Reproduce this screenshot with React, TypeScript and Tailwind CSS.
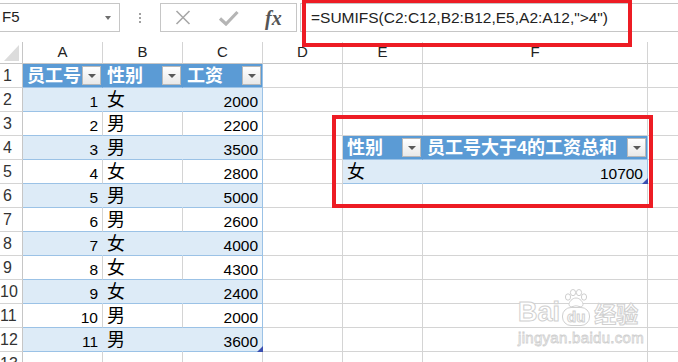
import React from 'react';

const data: [number, string, number][] = [
  [1, '女', 2000],
  [2, '男', 2200],
  [3, '男', 3500],
  [4, '女', 2800],
  [5, '男', 5000],
  [6, '男', 2600],
  [7, '女', 4000],
  [8, '女', 4300],
  [9, '女', 2400],
  [10, '男', 2000],
  [11, '男', 3600],
];

type Kind = 'plain' | 'head' | 'band' | 'row';

const kindClass = (kind: Kind, last: boolean) => {
  if (kind === 'head')
    return 'bg-[#5b9bd5] border-b border-b-[#9bc2e6] border-r ' + (last ? 'border-r-[#9bc2e6]' : 'border-r-[#5b9bd5]');
  if (kind === 'band')
    return 'bg-[#ddebf7] border-b border-b-[#9bc2e6] border-r ' + (last ? 'border-r-[#9bc2e6]' : 'border-r-[#ddebf7]');
  if (kind === 'row')
    return 'bg-white border-b border-b-[#9bc2e6] border-r ' + (last ? 'border-r-[#9bc2e6]' : 'border-r-[#d4d4d4]');
  return 'bg-white border-b border-r border-[#d4d4d4]';
};

const FilterBtn = () => (
  <div className="ml-auto mr-[1px] flex h-[19px] w-[19px] shrink-0 items-center justify-center border border-[#b9b9b9] bg-gradient-to-b from-white to-[#e9e9e9]">
    <div className="h-0 w-0 border-x-[4px] border-t-[4px] border-x-transparent border-t-[#595959]" />
  </div>
);

const Handle = () => (
  <div className="absolute bottom-[-1px] right-[-1px] h-[6px] w-[6px] bg-[#3a4fb0] [clip-path:polygon(100%_0,100%_100%,0_100%)]" />
);

function Cell({
  kind = 'plain',
  last = false,
  children,
  className = '',
}: {
  kind?: Kind;
  last?: boolean;
  children?: React.ReactNode;
  className?: string;
}) {
  return <div className={'relative flex min-w-0 items-center overflow-visible ' + kindClass(kind, last) + ' ' + className}>{children}</div>;
}

const HeadCell = ({ label, last = false }: { label: string; last?: boolean }) => (
  <Cell kind="head" last={last} className="pl-[4px]">
    <span className="whitespace-nowrap text-[18px] font-bold leading-none text-white">{label}</span>
    <FilterBtn />
  </Cell>
);

const Num = ({ v }: { v: number }) => (
  <span className="ml-auto pr-[4px] pt-[4px] text-[15.5px] leading-none text-black">{v}</span>
);

const Cjk = ({ v }: { v: string }) => (
  <span className="pl-[4px] text-[18px] leading-none text-black">{v}</span>
);

function sheetCell(r: number, c: number) {
  // c: 1..7 = A..G
  const key = `${r}-${c}`;
  if (r === 1 && c <= 3) {
    const labels = ['员工号', '性别', '工资'];
    return <HeadCell key={key} label={labels[c - 1]} last={c === 3} />;
  }
  if (r >= 2 && r <= 12 && c <= 3) {
    const [id, sex, pay] = data[r - 2];
    const kind: Kind = r % 2 === 0 ? 'band' : 'row';
    return (
      <Cell key={key} kind={kind} last={c === 3}>
        {c === 1 && <Num v={id} />}
        {c === 2 && <Cjk v={sex} />}
        {c === 3 && <Num v={pay} />}
        {c === 3 && r === 12 && <Handle />}
      </Cell>
    );
  }
  if (r === 4 && (c === 5 || c === 6)) {
    return <HeadCell key={key} label={c === 5 ? '性别' : '员工号大于4的工资总和'} last={c === 6} />;
  }
  if (r === 5 && (c === 5 || c === 6)) {
    return (
      <Cell key={key} kind="band" last={c === 6}>
        {c === 5 ? <Cjk v="女" /> : <Num v={10700} />}
        {c === 6 && <Handle />}
      </Cell>
    );
  }
  return <Cell key={key} />;
}

const Paw = () => (
  <svg width="24" height="19" viewBox="0 0 24 19" fill="white" stroke="#cfcfcf" strokeWidth="1">
    <ellipse cx="4" cy="8" rx="2.6" ry="3.2" />
    <ellipse cx="9" cy="3.6" rx="2.6" ry="3.1" />
    <ellipse cx="15" cy="3.6" rx="2.6" ry="3.1" />
    <ellipse cx="20" cy="8" rx="2.6" ry="3.2" />
    <path d="M12 9 C8 9 5 13 5 15.5 C5 17.5 7 18 9 17.5 C10.5 17 11 16.8 12 16.8 C13 16.8 13.5 17 15 17.5 C17 18 19 17.5 19 15.5 C19 13 16 9 12 9 Z" />
  </svg>
);

export default function App() {
  const letters = ['A', 'B', 'C', 'D', 'E', 'F', ''];
  const rowsIdx = Array.from({ length: 13 }, (_, i) => i + 1);

  return (
    <div className="relative h-[362px] w-[678px] overflow-hidden bg-white font-['Liberation_Sans','Noto_Sans_CJK_SC',sans-serif] text-[#222]">
      {/* formula bar */}
      <div className="flex h-[42px] items-start pt-[3px]">
        <div className="-ml-[1px] flex h-[29px] w-[121px] items-center border border-[#c6c6c6] pl-[2px] text-[15px] text-[#222]">
          <span>F5</span>
          <div className="ml-auto mr-[8px] h-0 w-0 border-x-[3.5px] border-t-[4px] border-x-transparent border-t-[#6e6e6e]" />
        </div>
        <div className="flex h-[29px] w-[40px] flex-col items-center justify-center gap-[2px]">
          <div className="h-[2px] w-[2px] bg-[#a0a0a0]" />
          <div className="h-[2px] w-[2px] bg-[#a0a0a0]" />
          <div className="h-[2px] w-[2px] bg-[#a0a0a0]" />
        </div>
        <div className="flex h-[29px] w-[137px] items-center border border-[#c6c6c6]">
          <svg className="ml-[14px]" width="16" height="15" viewBox="0 0 16 15">
            <path d="M1.5 1 L14.5 14 M14.5 1 L1.5 14" stroke="#a8a8a8" strokeWidth="1.6" />
          </svg>
          <svg className="ml-[27px]" width="21" height="16" viewBox="0 0 21 16">
            <path d="M2 8.5 L8 14 L19.5 2" stroke="#b5b5b5" strokeWidth="3.2" fill="none" />
          </svg>
          <span className="ml-[26px] font-['Liberation_Serif',serif] text-[20px] font-bold italic leading-none text-[#555]">fx</span>
        </div>
        <div className="ml-[3px] flex h-[29px] flex-1 items-center border border-r-0 border-[#c6c6c6] pl-[10px] text-[15.5px] text-[#222]">
          {'=SUMIFS(C2:C12,B2:B12,E5,A2:A12,">4")'}
        </div>
      </div>

      {/* sheet grid */}
      <div className="grid grid-cols-[23px_80px_80px_80px_80px_80px_225px_80px] grid-rows-[22px_repeat(13,24px)]">
        <div className="relative border-b border-r border-[#c6c6c6]">
          <svg className="absolute bottom-[2px] right-[3px]" width="15" height="16" viewBox="0 0 15 16">
            <path d="M15 0 L15 16 L0 16 Z" fill="#dcdcdc" />
          </svg>
        </div>
        {letters.map((l, i) => (
          <div key={i} className="flex items-center justify-center border-b border-r border-b-[#c6c6c6] border-r-[#d4d4d4] text-[15px] text-[#222]">
            {l}
          </div>
        ))}
        {rowsIdx.map((r) => (
          <React.Fragment key={r}>
            <div className="flex items-center border-b border-r border-b-[#d4d4d4] border-r-[#c6c6c6] text-[16px] text-[#333]">
              <span className="w-[15px] text-center">{r}</span>
            </div>
            {letters.map((_, i) => sheetCell(r, i + 1))}
          </React.Fragment>
        ))}
      </div>

      {/* annotation boxes */}
      <div className="absolute left-[302px] top-[-1px] h-[48px] w-[330px] border-4 border-[#ed1c24]" />
      <div className="absolute left-[332px] top-[115px] h-[93px] w-[321px] border-4 border-[#ed1c24]" />

      {/* watermark */}
      <div className="pointer-events-none absolute left-[518px] top-[289px] flex flex-col">
        <div className="flex items-end">
          <span className="text-[27px] font-bold leading-none text-white [-webkit-text-stroke:1px_#d0d0d0]">Bai</span>
          <div className="relative ml-[2px] flex flex-col items-center">
            <Paw />
            <span className="mt-[-1px] rounded-[9px] border border-[#d0d0d0] px-[4px] text-[15px] font-bold leading-[17px] text-white [-webkit-text-stroke:1px_#d0d0d0]">du</span>
          </div>
          <span className="ml-[4px] text-[22px] font-bold leading-none text-white [-webkit-text-stroke:1px_#d0d0d0]">经验</span>
        </div>
        <span className="mt-[4px] text-[15px] leading-none tracking-[0.3px] text-white [-webkit-text-stroke:0.8px_#d0d0d0]">jingyan.baidu.com</span>
      </div>
    </div>
  );
}
